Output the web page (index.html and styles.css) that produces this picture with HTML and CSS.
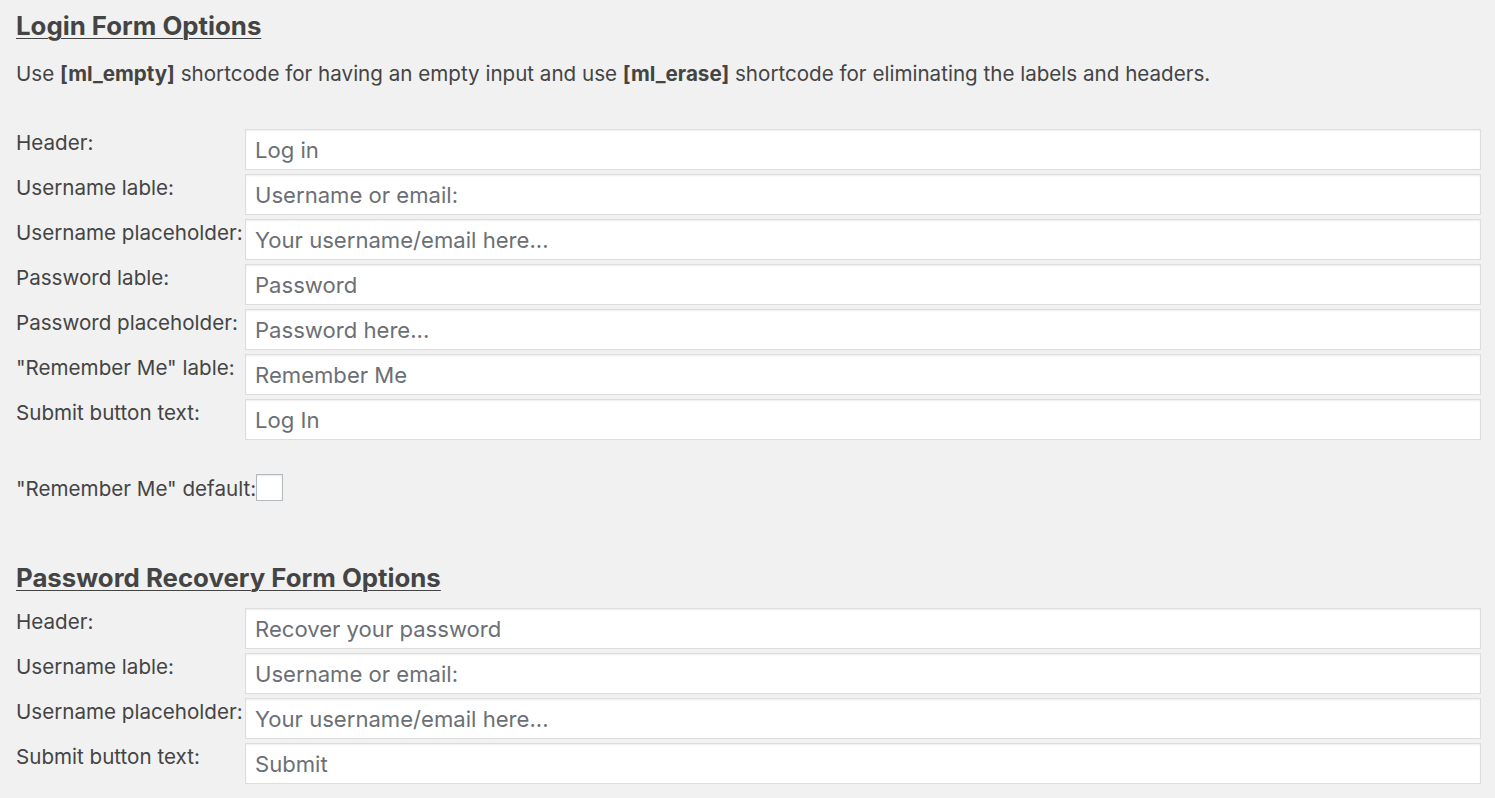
FILE: index.html
```html
<!DOCTYPE html>
<html lang="en">
<head>
<meta charset="utf-8">
<title>Login Form Options</title>
<link rel="stylesheet" href="styles.css">
</head>
<body>
<div class="page">
  <section class="section">
    <h2 class="title">Login Form Options</h2>
    <p class="desc">Use <b>[ml_empty]</b> shortcode for having an empty input and use <b>[ml_erase]</b> shortcode for eliminating the labels and headers.</p>
    <div class="rows">
      <div class="row"><label class="lbl">Header:</label><input class="field" type="text" value="Log in"></div>
      <div class="row"><label class="lbl">Username lable:</label><input class="field" type="text" value="Username or email:"></div>
      <div class="row"><label class="lbl">Username placeholder:</label><input class="field" type="text" value="Your username/email here..."></div>
      <div class="row"><label class="lbl">Password lable:</label><input class="field" type="text" value="Password"></div>
      <div class="row"><label class="lbl">Password placeholder:</label><input class="field" type="text" value="Password here..."></div>
      <div class="row"><label class="lbl">"Remember Me" lable:</label><input class="field" type="text" value="Remember Me"></div>
      <div class="row"><label class="lbl">Submit button text:</label><input class="field" type="text" value="Log In"></div>
    </div>
    <div class="check-row"><label class="check-lbl">"Remember Me" default:</label><span class="checkbox"></span></div>
  </section>
  <section class="section second">
    <h2 class="title">Password Recovery Form Options</h2>
    <div class="rows">
      <div class="row"><label class="lbl">Header:</label><input class="field" type="text" value="Recover your password"></div>
      <div class="row"><label class="lbl">Username lable:</label><input class="field" type="text" value="Username or email:"></div>
      <div class="row"><label class="lbl">Username placeholder:</label><input class="field" type="text" value="Your username/email here..."></div>
      <div class="row"><label class="lbl">Submit button text:</label><input class="field" type="text" value="Submit"></div>
    </div>
  </section>
</div>
</body>
</html>
```

FILE: styles.css
```css
html, body {
  margin: 0;
  padding: 0;
  background: #f1f1f1;
}
body {
  font-family: Inter, "Liberation Sans", sans-serif;
  color: #444;
  font-size: 21px;
}
.page {
  padding: 8px 0 0 16px;
}
.title {
  margin: 0;
  font-size: 25.8px;
  font-weight: 700;
  line-height: 36px;
  text-decoration: underline;
  text-decoration-thickness: 1px;
  text-underline-offset: 3px;
  color: #444;
}
.desc {
  margin: 15px 0 0 0;
  line-height: 30px;
  font-size: 20.6px;
}
.desc b {
  font-weight: 700;
}
.rows {
  margin-top: 40px;
  display: flex;
  flex-direction: column;
  gap: 4px;
}
.row {
  display: flex;
  align-items: flex-start;
}
.lbl {
  flex: 0 0 auto;
  min-width: 229px;
  font-size: 20.6px;
  line-height: 26px;
  padding-top: 1px;
}
.field {
  flex: 0 0 1236px;
  box-sizing: border-box;
  width: 1236px;
  height: 41px;
  margin: 0;
  border: 1px solid #ddd;
  background: #fff;
  box-shadow: inset 0 1px 2px rgba(0,0,0,0.07);
  font-family: inherit;
  font-size: 22.1px;
  color: #6b6f75;
  padding: 1px 9px 0 9px;
  outline: none;
}
.check-row {
  display: flex;
  align-items: center;
  margin-top: 32px;
}
.check-lbl {
  font-size: 20.6px;
  line-height: 28px;
  padding-top: 3px;
}
.checkbox {
  flex: 0 0 27px;
  box-sizing: border-box;
  width: 27px;
  height: 27px;
  border: 1px solid #b4b9be;
  background: #fff;
  box-shadow: inset 0 1px 2px rgba(0,0,0,0.1);
}
.second {
  margin-top: 57px;
}
.second .rows {
  margin-top: 12px;
}
```
